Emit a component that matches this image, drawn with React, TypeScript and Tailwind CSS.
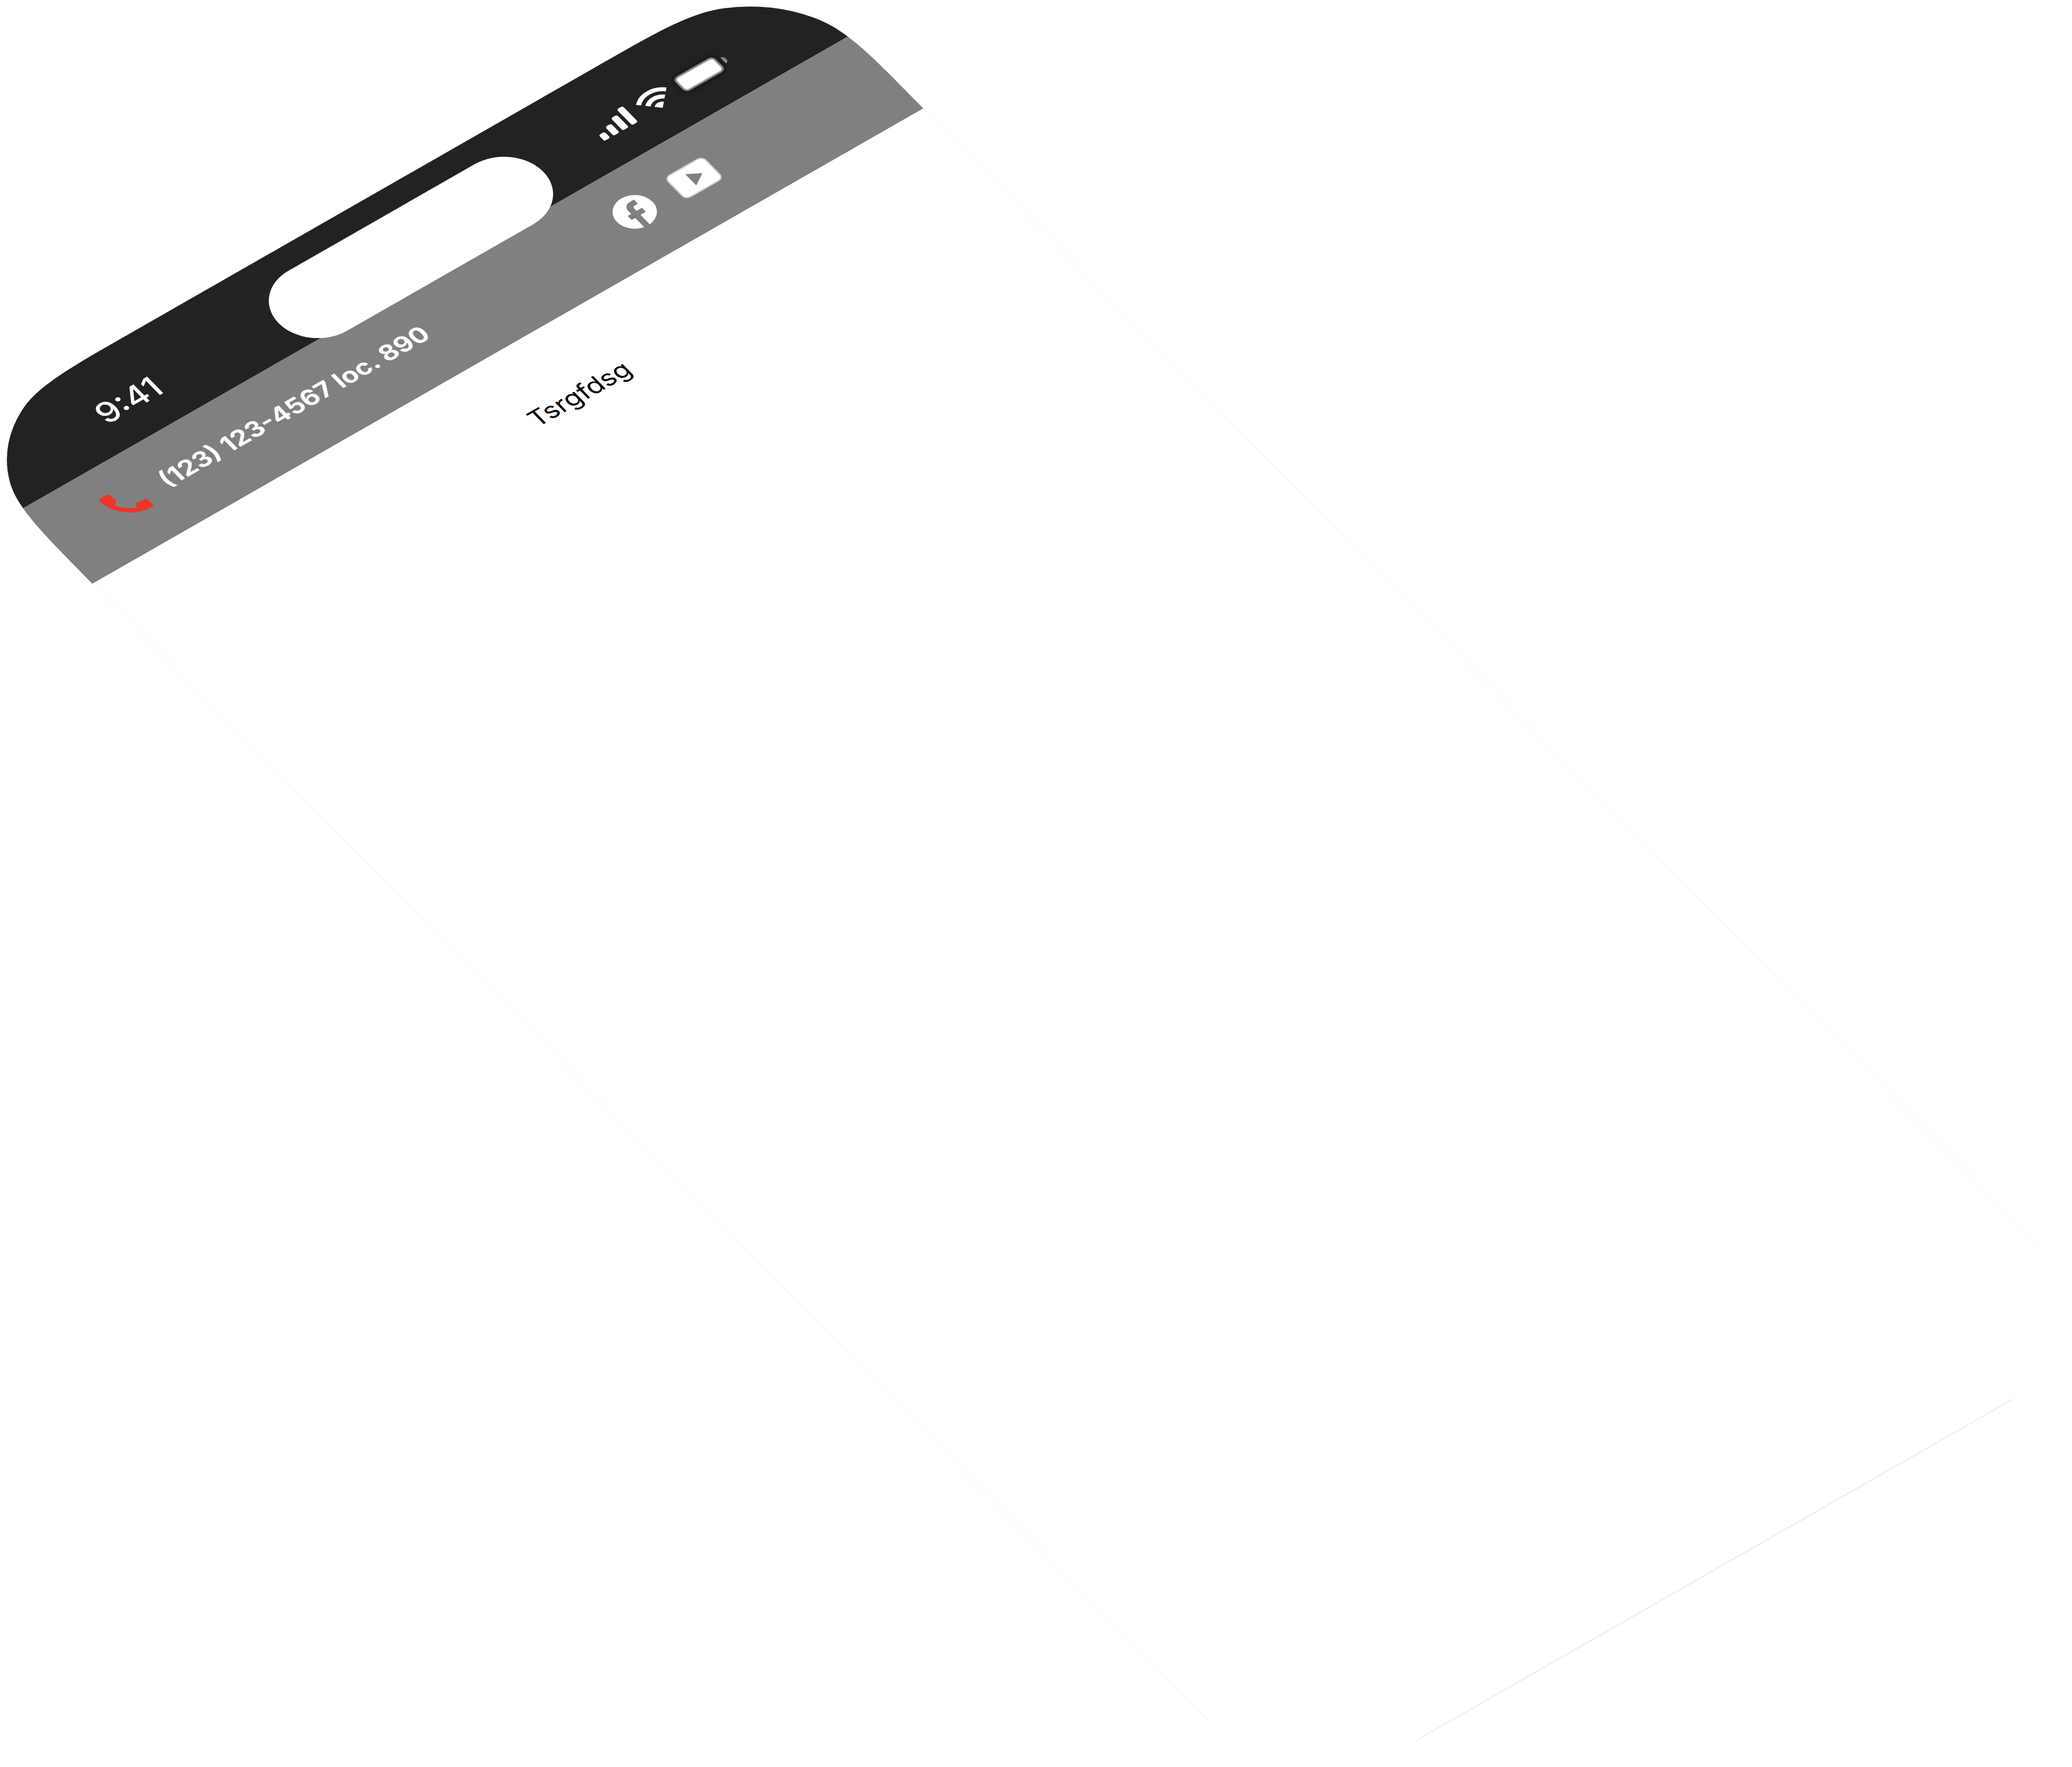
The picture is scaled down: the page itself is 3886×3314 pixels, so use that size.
import React from "react";
import { MdCall, MdFacebook } from "react-icons/md";

function SignalIcon() {
  return (
    <svg viewBox="0 0 74 46" className="h-[46px] w-[74px]" fill="#fff" role="img" aria-label="Signal">
      <rect x="0" y="29" width="13" height="17" rx="4" />
      <rect x="20" y="21" width="13" height="25" rx="4" />
      <rect x="40" y="11" width="13" height="35" rx="4" />
      <rect x="60" y="1" width="13" height="45" rx="4" />
    </svg>
  );
}

function WifiIcon() {
  return (
    <svg viewBox="0 0 68 47" className="h-[47px] w-[68px]" role="img" aria-label="Wi-Fi">
      <path d="M34 47 L24 37 A14 14 0 0 1 44 37 Z" fill="#fff" />
      <path d="M15.8 28.8 A25.8 25.8 0 0 1 52.2 28.8" fill="none" stroke="#fff" strokeWidth="9" />
      <path d="M4.2 17.2 A42.2 42.2 0 0 1 63.8 17.2" fill="none" stroke="#fff" strokeWidth="9" />
    </svg>
  );
}

function Battery() {
  return (
    <div className="flex items-center gap-2" role="img" aria-label="Battery">
      <div className="h-10 w-[88px] rounded-[10px] bg-[#6a6a6a] p-[5px] shadow-[0_0_5px_3px_#141414]">
        <div className="h-full rounded-[5px] bg-white shadow-[0_0_4px_1px_#ffffff]" />
      </div>
      <div className="h-4 w-[6px] rounded-r-full bg-[#8a8a8a]" />
    </div>
  );
}

function YoutubeIcon() {
  return (
    <svg viewBox="0 0 84 64" className="h-16 w-[84px]" aria-hidden="true">
      <rect x="0" y="0" width="84" height="64" rx="13" fill="#fff" opacity="0.65" />
      <rect x="3" y="3" width="78" height="58" rx="9" fill="#fff" />
      <path d="M35 16 L60 32 L35 48 Z" fill="#808080" />
    </svg>
  );
}

export default function App() {
  return (
    <main className="h-screen w-full overflow-hidden bg-white font-['Inter',sans-serif]">
      <section className="relative flex aspect-[393/852] w-[1796px] origin-top-left flex-col bg-white [clip-path:path('M403_0L1393_0c141_0_212_0_265_28a252_252_0_0_1_110_110c28_53_28_124_28_265L1796_3900L0_3900L0_403c0_-141_0_-212_28_-265a252_252_0_0_1_110_-110c53_-28_124_-28_265_-28Z')] [transform:matrix(0.868,-0.4965,0.649,0.661,-97,820)]">
        <div className="flex h-[207px] shrink-0 items-start justify-between bg-[#222222] pt-20 pr-[206px] pl-[236px] text-white">
          <time className="text-[64px] leading-20 font-medium">9:41</time>
          <div className="flex items-center gap-[18px] pt-[17px]">
            <SignalIcon />
            <WifiIcon />
            <Battery />
          </div>
        </div>
        <header className="flex h-[209px] shrink-0 items-start justify-between bg-[#808080] pt-[51px] pr-[370px] pl-[111px] text-white">
          <a href="tel:1231234567" className="flex items-center gap-8">
            <MdCall className="size-[92px] text-[#ee3524]" />
            <span className="text-[49px] leading-[92px] font-bold whitespace-nowrap">(123) 123-4567 loc. 890</span>
          </a>
          <div className="flex items-center gap-10">
            <a href="#facebook" aria-label="Facebook">
              <MdFacebook className="size-[92px]" />
            </a>
            <a href="#youtube" aria-label="YouTube">
              <YoutubeIcon />
            </a>
          </div>
        </header>
        <div className="mb-[252px] flex-1 border-x border-[#eeeeee] bg-white pt-[129px]">
          <p className="pl-[68px] text-center text-[50px] leading-16 text-black">Tsrgfdsg</p>
        </div>
        <div className="mr-[246px] ml-[260px] h-px bg-[#d4d4d4]" />
        <div className="absolute top-[51px] left-1/2 h-[170px] w-[572px] -translate-x-1/2 rounded-full bg-white" />
      </section>
    </main>
  );
}
